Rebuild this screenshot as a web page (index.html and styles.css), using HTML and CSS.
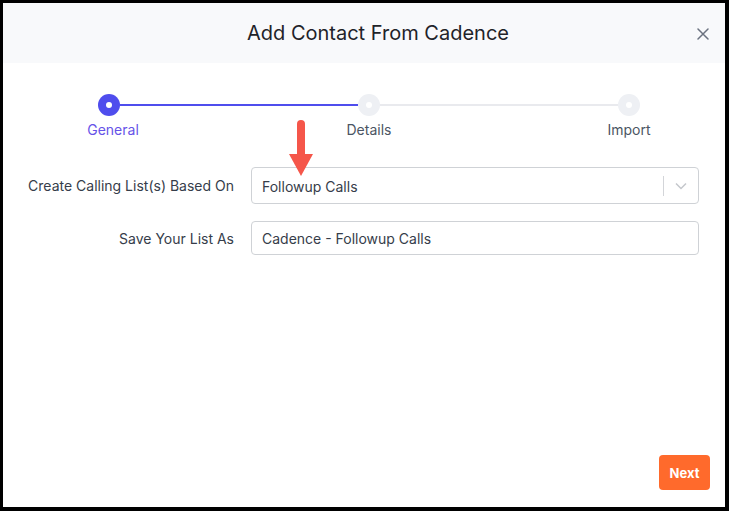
FILE: index.html
```html
<!DOCTYPE html>
<html>
<head>
<meta charset="utf-8">
<link rel="stylesheet" href="styles.css">
</head>
<body>
<div class="modal">
  <div class="header">
    <h1 class="title">Add Contact From Cadence</h1>
    <button class="close" aria-label="Close">
      <svg width="12" height="12" viewBox="0 0 12 12"><path d="M1 1 L11 11 M11 1 L1 11" stroke="#6b7280" stroke-width="1.5" stroke-linecap="round"/></svg>
    </button>
  </div>
  <div class="body">
    <div class="stepper">
      <div class="step"><span class="dot active"></span><span class="label active">General</span></div>
      <div class="bar active"></div>
      <div class="step"><span class="dot"></span><span class="label">Details</span></div>
      <div class="bar"></div>
      <div class="step"><span class="dot"></span><span class="label">Import</span></div>
    </div>
    <div class="form">
      <label class="flabel">Create Calling List(s) Based On</label>
      <div class="select">
        <span class="value">Followup Calls</span>
        <span class="sep"></span>
        <svg class="chev" width="12" height="8" viewBox="0 0 12 8"><path d="M1 1.5 L6 6.5 L11 1.5" fill="none" stroke="#c4c7cc" stroke-width="1.5"/></svg>
      </div>
      <label class="flabel">Save Your List As</label>
      <div class="input">Cadence - Followup Calls</div>
    </div>
    <svg class="arrow" width="26" height="60" viewBox="0 0 26 60"><line x1="13" y1="6" x2="13" y2="40" stroke="#f5564a" stroke-width="8" stroke-linecap="round"/><path d="M1 36 L25 36 L13 58 Z" fill="#f5564a"/></svg>
    <div class="footer"><button class="next">Next</button></div>
  </div>
</div>
</body>
</html>
```
FILE: styles.css
```css
html, body { margin: 0; padding: 0; }
body { background: #000; width: 729px; height: 511px; font-family: Inter, "Noto Sans", sans-serif; }
.modal {
  margin: 3px 4px 4px 3px;
  width: 722px; height: 504px;
  background: #fff;
  display: flex; flex-direction: column;
}
.header {
  height: 60px; background: #f8f9fb;
  display: flex; align-items: center; justify-content: center;
  position: relative; padding-left: 28px;
}
.title { margin: 0; font-size: 20px; font-weight: 400; color: #1f2329; letter-spacing: 0; }
.close {
  position: absolute; right: 16px; top: 25px;
  border: 0; background: none; padding: 0; width: 12px; height: 12px; display: flex;
}
.body { flex: 1; position: relative; display: flex; flex-direction: column; }
.stepper {
  display: flex; align-items: flex-start;
  margin: 31px 0 0 66px; width: 600px;
}
.step { width: 80px; display: flex; flex-direction: column; align-items: center; position: relative; z-index: 1; }
.dot { width: 22px; height: 22px; border-radius: 50%; background: #eef0f4; position: relative; }
.dot::after { content: ""; position: absolute; left: 8px; top: 8px; width: 6px; height: 6px; border-radius: 50%; background: #fff; }
.dot.active { background: #4f4ded; }
.label { margin-top: 5px; font-size: 14px; line-height: 17px; color: #4b5563; }
.label.active { color: #6653e8; margin-left: 8px; }
.bar { flex: 1; height: 2px; background: #e9eaee; margin: 10px -29px 0; }
.bar.active { background: #4f4ded; }
.form {
  display: grid; grid-template-columns: 211px 1fr;
  column-gap: 17px; row-gap: 17px; align-items: center;
  margin: 29px 26px 0 20px;
}
.flabel { text-align: right; font-size: 14px; color: #363d4a; }
.select, .input {
  border: 1px solid #cfd2d6; border-radius: 4px; box-sizing: border-box;
  font-size: 14px; color: #363d4a; display: flex; align-items: center;
  padding-left: 10px;
}
.select { height: 37px; padding-top: 1px; }
.input { height: 34px; }
.value { flex: 1; }
.sep { width: 1px; height: 20px; background: #d3d5d9; }
.chev { margin: 0 11px 0 11px; }
.arrow { position: absolute; left: 285px; top: 55px; }
.footer { margin-top: auto; display: flex; justify-content: flex-end; padding: 0 15px 17px 0; }
.next {
  width: 51px; height: 35px; border: 0; border-radius: 4px;
  background: #ff6a2c; color: #fff; font-family: Inter, sans-serif; font-weight: 700; font-size: 13px; padding: 0;
}
```
